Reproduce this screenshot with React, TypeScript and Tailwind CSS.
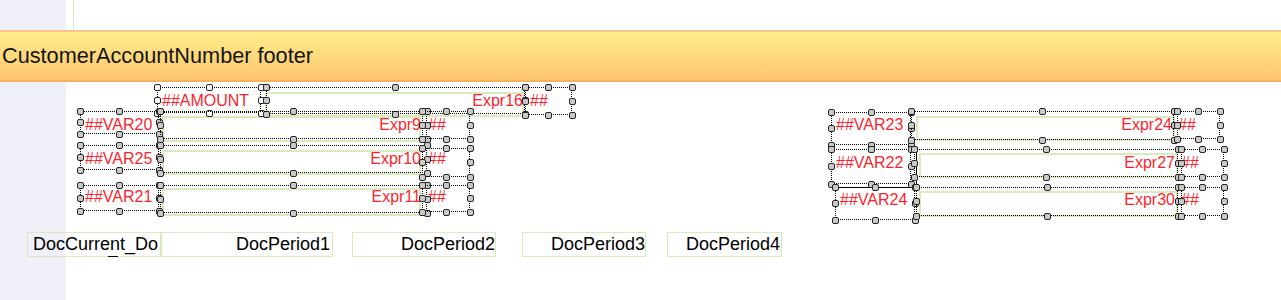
import React from "react";

type Box = { x: number; y: number; w: number; h: number };

const BODY_TOP = 82;

// page coords for everything on the band canvas
const greenBoxes: (Box & { thin?: boolean })[] = [
  { x: 265, y: 92, w: 259, h: 25 },
  { x: 162, y: 116, w: 259, h: 26 },
  { x: 162, y: 150, w: 259, h: 25 },
  { x: 162, y: 188, w: 259, h: 28 },
  { x: 916, y: 116, w: 259, h: 25 },
  { x: 919, y: 153, w: 259, h: 25 },
  { x: 919, y: 191, w: 259, h: 26 },
  { x: 27, y: 232, w: 134, h: 25, thin: true },
  { x: 161, y: 232, w: 172, h: 25, thin: true },
  { x: 352, y: 232, w: 144, h: 25, thin: true },
  { x: 522, y: 232, w: 124, h: 25, thin: true },
  { x: 667, y: 232, w: 115, h: 25, thin: true },
];

const selections: (Box & { primary?: boolean })[] = [
  { x: 157, y: 87, w: 104, h: 26, primary: true },
  { x: 266, y: 87, w: 259, h: 27 },
  { x: 525, y: 87, w: 47, h: 28 },
  { x: 80, y: 111, w: 79, h: 23 },
  { x: 160, y: 111, w: 267, h: 28 },
  { x: 422, y: 111, w: 48, h: 28 },
  { x: 80, y: 145, w: 79, h: 25 },
  { x: 160, y: 145, w: 267, h: 28 },
  { x: 422, y: 148, w: 48, h: 29 },
  { x: 80, y: 185, w: 79, h: 26 },
  { x: 160, y: 185, w: 267, h: 28 },
  { x: 422, y: 185, w: 48, h: 27 },
  { x: 831, y: 112, w: 80, h: 33 },
  { x: 911, y: 111, w: 263, h: 29 },
  { x: 1177, y: 111, w: 43, h: 28 },
  { x: 831, y: 149, w: 80, h: 35 },
  { x: 914, y: 149, w: 264, h: 28 },
  { x: 1181, y: 149, w: 43, h: 28 },
  { x: 835, y: 187, w: 80, h: 33 },
  { x: 916, y: 187, w: 262, h: 29 },
  { x: 1181, y: 187, w: 43, h: 29 },
];

type Label = { text: string; x: number; cy: number; right?: boolean };

const redLabels: Label[] = [
  { text: "##AMOUNT", x: 162, cy: 101 },
  { text: "Expr16", x: 523, cy: 101, right: true },
  { text: "##", x: 530, cy: 101 },
  { text: "##VAR20", x: 85, cy: 125 },
  { text: "Expr9", x: 421, cy: 125, right: true },
  { text: "##", x: 428, cy: 125 },
  { text: "##VAR25", x: 85, cy: 159 },
  { text: "Expr10", x: 421, cy: 159, right: true },
  { text: "##", x: 428, cy: 159 },
  { text: "##VAR21", x: 85, cy: 197 },
  { text: "Expr11", x: 421, cy: 197, right: true },
  { text: "##", x: 428, cy: 197 },
  { text: "##VAR23", x: 836, cy: 125 },
  { text: "Expr24", x: 1172, cy: 125, right: true },
  { text: "##", x: 1178, cy: 125 },
  { text: "##VAR22", x: 836, cy: 163 },
  { text: "Expr27", x: 1175, cy: 163, right: true },
  { text: "##", x: 1181, cy: 163 },
  { text: "##VAR24", x: 840, cy: 200 },
  { text: "Expr30", x: 1175, cy: 200, right: true },
  { text: "##", x: 1181, cy: 200 },
];

const blackLabels: Label[] = [
  { text: "DocCurrent_Do", x: 33, cy: 244 },
  { text: "DocPeriod1", x: 330, cy: 244, right: true },
  { text: "DocPeriod2", x: 495, cy: 244, right: true },
  { text: "DocPeriod3", x: 645, cy: 244, right: true },
  { text: "DocPeriod4", x: 780, cy: 244, right: true },
];

const Handles = ({ b, primary }: { b: Box; primary?: boolean }) => {
  const xs = [0, b.w / 2, b.w];
  const ys = [0, b.h / 2, b.h];
  const pts: [number, number][] = [];
  xs.forEach((hx, i) =>
    ys.forEach((hy, j) => {
      if (i === 1 && j === 1) return;
      pts.push([hx, hy]);
    })
  );
  return (
    <>
      {pts.map(([hx, hy], k) => (
        <div
          key={k}
          className={`absolute h-[7px] w-[7px] rounded-[2px] border border-[#262626] ${
            primary ? "bg-white" : "bg-[#c9c9c9]"
          }`}
          style={{ left: hx - 3.5, top: hy - 3.5 }}
        />
      ))}
    </>
  );
};

const TextAt = ({ l, className }: { l: Label; className: string }) => (
  <span
    className={`absolute -translate-y-1/2 whitespace-nowrap leading-none ${className} ${
      l.right ? "-translate-x-full" : ""
    }`}
    style={{ left: l.x, top: l.cy - BODY_TOP }}
  >
    {l.text}
  </span>
);

export default function App() {
  return (
    <div className="h-[300px] w-full overflow-hidden bg-white font-['Liberation_Sans',Arial,sans-serif]">
      <div className="flex h-[30px]">
        <div className="w-[66px] bg-[#f0f0f9]" />
        <div className="ml-[7px] w-px bg-[#dcedc4]" />
      </div>

      <div className="flex h-[52px] items-center border-t-2 border-b-2 border-t-[#f6c48e] border-b-[#f7b25e] bg-gradient-to-b from-[#ffec8a] to-[#fdc66f] pl-[2px]">
        <span className="text-[21.7px] leading-none text-[#151515]">CustomerAccountNumber footer</span>
      </div>

      <div className="relative h-[218px]">
        <div className="absolute inset-y-0 left-0 w-[66px] bg-[#f0f0f9]" />

        {greenBoxes.map((g, i) => (
          <div
            key={i}
            className={`absolute ${g.thin ? "border border-[#d9ebbd]" : "border-2 border-[#d9ebbd]"}`}
            style={{ left: g.x, top: g.y - BODY_TOP, width: g.w, height: g.h }}
          />
        ))}

        {/* bottom row */}
        <div className="absolute h-px w-[10px] bg-black" style={{ left: 108, top: 256 - BODY_TOP }} />
        {blackLabels.map((l, i) => (
          <TextAt key={i} l={l} className="text-[18px] text-black" />
        ))}

        {redLabels.map((l, i) => (
          <TextAt key={i} l={l} className="text-[16px] text-[#ff1f2d]" />
        ))}

        <div className="absolute h-px w-[81px] bg-black" style={{ left: 835, top: 187 - BODY_TOP }} />
        <div className="absolute h-[38px] w-px bg-black" style={{ left: 916, top: 149 - BODY_TOP }} />

        {selections.map((s, i) => (
          <div
            key={i}
            className="absolute border border-dotted border-black"
            style={{ left: s.x, top: s.y - BODY_TOP, width: s.w, height: s.h }}
          >
            <div className="absolute -left-px -top-px">
              <Handles b={s} primary={s.primary} />
            </div>
          </div>
        ))}
      </div>
    </div>
  );
}
